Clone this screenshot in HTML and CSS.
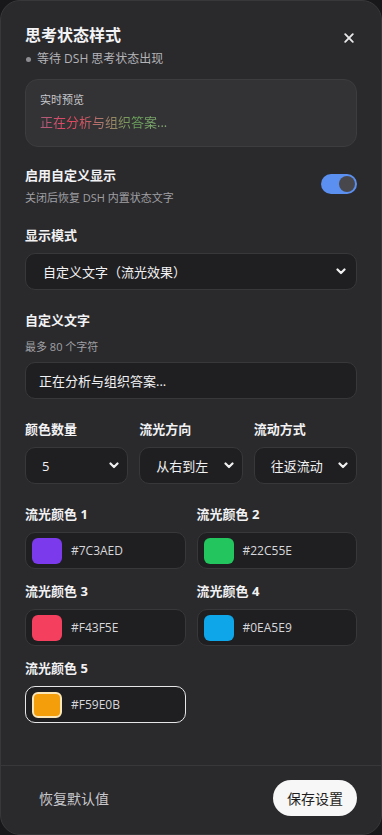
FILE: index.html
```html
<!DOCTYPE html>
<html lang="zh-CN">
<head>
<meta charset="utf-8">
<title>思考状态样式</title>
<link rel="stylesheet" href="styles.css">
</head>
<body>
<div class="panel">
  <div class="content">
    <div class="header">
      <h1 class="title">思考状态样式</h1>
      <button class="close" aria-label="关闭">
        <svg width="12" height="12" viewBox="0 0 12 12"><path d="M2.2 2.2 L9.8 9.8 M9.8 2.2 L2.2 9.8" stroke="#e8e8ea" stroke-width="1.9" stroke-linecap="round"/></svg>
      </button>
    </div>
    <div class="status"><span class="dot"></span>等待 DSH 思考状态出现</div>

    <div class="preview">
      <div class="preview-label">实时预览</div>
      <div class="preview-text">正在分析与组织答案...</div>
    </div>

    <div class="toggle-row">
      <div>
        <div class="label">启用自定义显示</div>
        <div class="hint hint-tight">关闭后恢复 DSH 内置状态文字</div>
      </div>
      <div class="toggle"><span class="knob"></span></div>
    </div>

    <div class="label section">显示模式</div>
    <div class="field select">
      <span>自定义文字（流光效果）</span>
      <svg class="chev" width="10" height="7" viewBox="0 0 10 7"><path d="M1.5 1.5 L5 5 L8.5 1.5" fill="none" stroke="#f0f0f0" stroke-width="2.2" stroke-linecap="round" stroke-linejoin="round"/></svg>
    </div>

    <div class="label section">自定义文字</div>
    <div class="hint hint-gap">最多 80 个字符</div>
    <div class="field input">正在分析与组织答案...</div>

    <div class="grid3 section">
      <div class="col">
        <div class="label">颜色数量</div>
        <div class="field select small">
          <span>5</span>
          <svg class="chev" width="10" height="7" viewBox="0 0 10 7"><path d="M1.5 1.5 L5 5 L8.5 1.5" fill="none" stroke="#f0f0f0" stroke-width="2.2" stroke-linecap="round" stroke-linejoin="round"/></svg>
        </div>
      </div>
      <div class="col">
        <div class="label">流光方向</div>
        <div class="field select small">
          <span>从右到左</span>
          <svg class="chev" width="10" height="7" viewBox="0 0 10 7"><path d="M1.5 1.5 L5 5 L8.5 1.5" fill="none" stroke="#f0f0f0" stroke-width="2.2" stroke-linecap="round" stroke-linejoin="round"/></svg>
        </div>
      </div>
      <div class="col">
        <div class="label">流动方式</div>
        <div class="field select small">
          <span>往返流动</span>
          <svg class="chev" width="10" height="7" viewBox="0 0 10 7"><path d="M1.5 1.5 L5 5 L8.5 1.5" fill="none" stroke="#f0f0f0" stroke-width="2.2" stroke-linecap="round" stroke-linejoin="round"/></svg>
        </div>
      </div>
    </div>

    <div class="colors section">
      <div class="col">
        <div class="label">流光颜色 1</div>
        <div class="field color"><span class="swatch" style="background:#7C3AED"></span><span class="hex">#7C3AED</span></div>
      </div>
      <div class="col">
        <div class="label">流光颜色 2</div>
        <div class="field color"><span class="swatch" style="background:#22C55E"></span><span class="hex">#22C55E</span></div>
      </div>
      <div class="col">
        <div class="label">流光颜色 3</div>
        <div class="field color"><span class="swatch" style="background:#F43F5E"></span><span class="hex">#F43F5E</span></div>
      </div>
      <div class="col">
        <div class="label">流光颜色 4</div>
        <div class="field color"><span class="swatch" style="background:#0EA5E9"></span><span class="hex">#0EA5E9</span></div>
      </div>
      <div class="col">
        <div class="label">流光颜色 5</div>
        <div class="field color focused"><span class="swatch swatch-focused" style="background:#F59E0B"></span><span class="hex">#F59E0B</span></div>
      </div>
    </div>
  </div>

  <div class="footer">
    <button class="btn-reset">恢复默认值</button>
    <button class="btn-save">保存设置</button>
  </div>
</div>
</body>
</html>
```

FILE: styles.css
```css
* { box-sizing: border-box; }

html, body {
  margin: 0;
  padding: 0;
  background: #18181a;
}

body {
  font-family: "Open Sans", "Noto Sans CJK SC", sans-serif;
  color: #f0f0f2;
}

.panel {
  width: 382px;
  height: 835px;
  background: #2a2a2d;
  border: 1px solid #38383b;
  border-radius: 20px;
  display: flex;
  flex-direction: column;
  overflow: hidden;
}

.content {
  flex: 1;
  padding: 23px 24px 0 24px;
}

.header {
  display: flex;
  justify-content: space-between;
  align-items: center;
}

.title {
  margin: 0;
  font-size: 16px;
  line-height: 22px;
  font-weight: 700;
  color: #f4f4f6;
}

.close {
  background: none;
  border: none;
  padding: 0;
  margin-top: 6px;
  margin-right: 2px;
  width: 12px;
  height: 12px;
  display: flex;
}

.status {
  margin-top: 5px;
  display: flex;
  align-items: center;
  gap: 6px;
  font-size: 12px;
  line-height: 16px;
  color: #b4b4b8;
}

.dot {
  width: 5px;
  height: 5px;
  border-radius: 50%;
  background: #8e8e92;
  margin-left: 1px;
}

.preview {
  margin-top: 12px;
  background: #333336;
  border: 1px solid #3d3d40;
  border-radius: 13px;
  padding: 12px 14px 14px 14px;
}

.preview-label {
  font-size: 11px;
  line-height: 15px;
  color: #c8c8cc;
}

.preview-text {
  margin-top: 6px;
  font-size: 13px;
  line-height: 18px;
  background: linear-gradient(90deg, #a8607e 0%, #e8455f 22%, #d45060 32%, #b0786e 48%, #8a9060 62%, #6aa55a 75%, #8aa878 100%);
  -webkit-background-clip: text;
  background-clip: text;
  color: transparent;
  display: inline-block;
}

.toggle-row {
  margin-top: 19px;
  display: flex;
  justify-content: space-between;
  align-items: center;
}

.label {
  font-size: 13px;
  line-height: 18px;
  font-weight: 700;
  color: #f2f2f4;
}

.hint {
  font-size: 11px;
  line-height: 15px;
  color: #a0a0a4;
}

.hint-tight { margin-top: 6px; }
.hint-gap { margin-top: 10px; }

.toggle {
  width: 36px;
  height: 20px;
  border-radius: 10px;
  background: #5b8ff0;
  display: flex;
  align-items: center;
  justify-content: flex-end;
  padding-right: 2px;
  margin-top: -4px;
}

.knob {
  width: 16px;
  height: 16px;
  border-radius: 50%;
  background: #48484c;
}

.section { margin-top: 21px; }

.field {
  background: #1f1f21;
  border: 1px solid #38383b;
  border-radius: 10px;
  height: 37px;
  display: flex;
  align-items: center;
  color: #f2f2f4;
}

.select {
  margin-top: 9px;
  justify-content: space-between;
  padding: 0 10px 0 17px;
  font-size: 13px;
}

.select.small {
  padding: 0 8px 0 16px;
}

.input {
  margin-top: 8px;
  padding: 0 13px;
  font-size: 13px;
}

.grid3 {
  display: grid;
  grid-template-columns: 1fr 1fr 1fr;
  gap: 11px;
}

.colors {
  display: grid;
  grid-template-columns: 1fr 1fr;
  column-gap: 11px;
  row-gap: 13px;
}

.color {
  margin-top: 9px;
  padding: 0 6px;
  gap: 9px;
}

.swatch {
  width: 30px;
  height: 26px;
  border-radius: 6px;
  flex: none;
}

.swatch-focused {
  border: 2px solid #fbe6b8;
}

.focused {
  border-color: #e6e6e8;
}

.hex {
  font-size: 12px;
  color: #d8d8dc;
}

.footer {
  border-top: 1px solid #38383b;
  padding: 14px 24px 18px 24px;
  display: flex;
  justify-content: space-between;
  align-items: center;
}

.btn-reset {
  background: none;
  border: none;
  font-family: inherit;
  font-size: 14px;
  color: #c8c8cc;
  padding: 0 14px;
  height: 36px;
}

.btn-save {
  background: #f7f7f8;
  border: none;
  border-radius: 18px;
  height: 36px;
  padding: 0 14px;
  font-family: inherit;
  font-size: 14px;
  color: #1e1e20;
}
```
